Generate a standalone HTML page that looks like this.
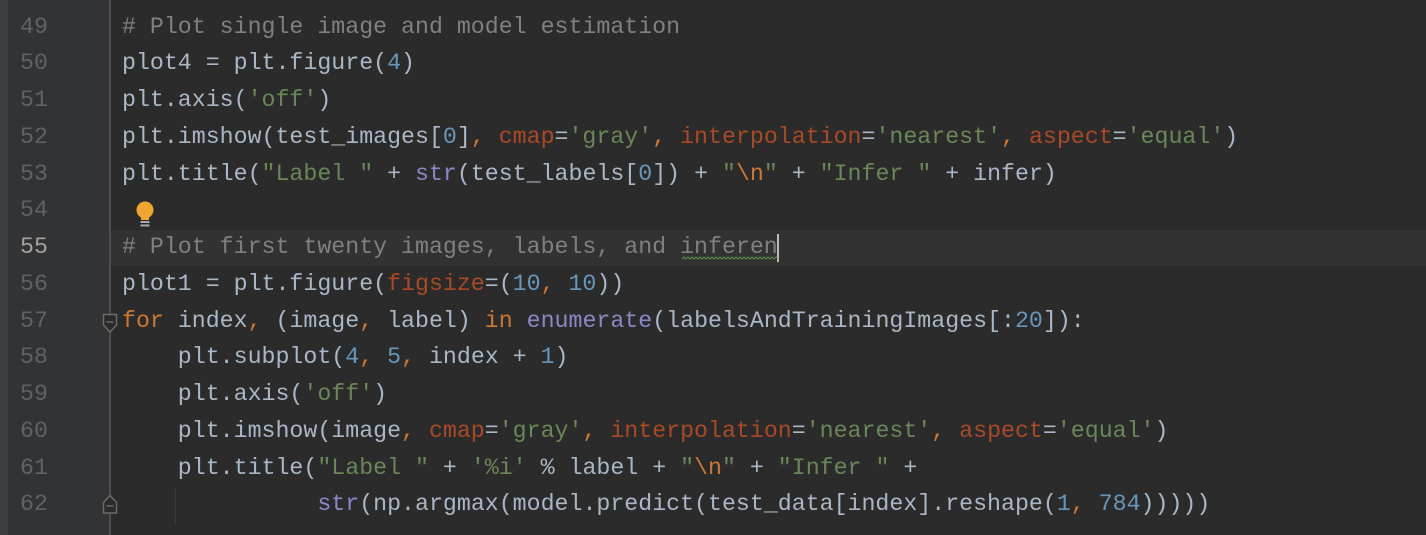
<!DOCTYPE html>
<html><head><meta charset="utf-8"><style>
html,body{margin:0;padding:0;width:1426px;height:535px;overflow:hidden;background:#2b2b2b;position:relative}
.strip{position:absolute;left:0;top:0;width:8px;height:535px;background:#3c3f41}
.gutter{position:absolute;left:8px;top:0;width:102px;height:535px;background:#313335}
.sep{position:absolute;left:109px;top:0;width:2px;height:535px;background:#4b4d4f}
.cur{position:absolute;left:110px;top:230px;width:1316px;height:36px;background:#323232}
.lines{position:absolute;left:0;top:8.6px;font-family:"Liberation Mono",monospace;font-size:23.25px;line-height:36.75px;white-space:pre}
.ln{position:absolute;left:20px;color:#606366}
.code{position:absolute;left:122px;color:#a9b7c6}
.c{color:#808080}.k{color:#cc7832}.s{color:#6a8759}.n{color:#6897bb}.b{color:#8888c6}.p{color:#aa4926}
.caret{position:absolute;left:777px;top:234px;width:2px;height:28px;background:#bbbbbb}
.sq{position:absolute;left:682px;top:256px;width:96px;height:4px}
</style></head><body>
<div class="strip"></div><div class="gutter"></div>
<div class="cur"></div><div class="sep"></div>
<div class="lines">
<div class="ln" style="top:0">49
50
51
52
53
54
<span style="color:#a4a3a3">55</span>
56
57
58
59
60
61
62</div>
<div class="code" style="top:0"><span class="c"># Plot single image and model estimation</span>
plot4 = plt.figure(<span class="n">4</span>)
plt.axis(<span class="s">'off'</span>)
plt.imshow(test_images[<span class="n">0</span>]<span class="k">, </span><span class="p">cmap</span>=<span class="s">'gray'</span><span class="k">, </span><span class="p">interpolation</span>=<span class="s">'nearest'</span><span class="k">, </span><span class="p">aspect</span>=<span class="s">'equal'</span>)
plt.title(<span class="s">"Label "</span> + <span class="b">str</span>(test_labels[<span class="n">0</span>]) + <span class="s">"<span class="k">\n</span>"</span> + <span class="s">"Infer "</span> + infer)

<span class="c"># Plot first twenty images, labels, and inferen</span>
plot1 = plt.figure(<span class="p">figsize</span>=(<span class="n">10</span><span class="k">, </span><span class="n">10</span>))
<span class="k">for </span>index<span class="k">, </span>(image<span class="k">, </span>label) <span class="k">in </span><span class="b">enumerate</span>(labelsAndTrainingImages[:<span class="n">20</span>]):
    plt.subplot(<span class="n">4</span><span class="k">, </span><span class="n">5</span><span class="k">, </span>index + <span class="n">1</span>)
    plt.axis(<span class="s">'off'</span>)
    plt.imshow(image<span class="k">, </span><span class="p">cmap</span>=<span class="s">'gray'</span><span class="k">, </span><span class="p">interpolation</span>=<span class="s">'nearest'</span><span class="k">, </span><span class="p">aspect</span>=<span class="s">'equal'</span>)
    plt.title(<span class="s">"Label "</span> + <span class="s">'%i'</span> % label + <span class="s">"<span class="k">\n</span>"</span> + <span class="s">"Infer "</span> +
              <span class="b">str</span>(np.argmax(model.predict(test_data[index].reshape(<span class="n">1</span><span class="k">, </span><span class="n">784</span>)))))</div></div>
<div class="caret"></div>
<svg class="sq" viewBox="0 0 96 4"><path d="M0 3 L2 1 L4 3 L6 1 L8 3 L10 1 L12 3 L14 1 L16 3 L18 1 L20 3 L22 1 L24 3 L26 1 L28 3 L30 1 L32 3 L34 1 L36 3 L38 1 L40 3 L42 1 L44 3 L46 1 L48 3 L50 1 L52 3 L54 1 L56 3 L58 1 L60 3 L62 1 L64 3 L66 1 L68 3 L70 1 L72 3 L74 1 L76 3 L78 1 L80 3 L82 1 L84 3 L86 1 L88 3 L90 1 L92 3 L94 1 L96 3" stroke="#5f8c4a" stroke-width="1" fill="none"/></svg>
<svg style="position:absolute;left:134px;top:201px" width="22" height="28" viewBox="0 0 22 28">
<circle cx="11" cy="9" r="8.5" fill="#f0a732"/><rect x="7" y="14" width="8" height="5" fill="#f0a732"/>
<rect x="6.5" y="20" width="9" height="2" fill="#a9a9a9"/><rect x="6.5" y="23.5" width="9" height="2" fill="#a9a9a9"/></svg>
<svg style="position:absolute;left:102px;top:313px" width="16" height="22" viewBox="0 0 16 22">
<path d="M1.5 1.5 H14.5 V12 L8 19 L1.5 12 Z" fill="#2b2b2b" stroke="#6b6b6b" stroke-width="1.5"/><path d="M4.5 9 H11.5" stroke="#6b6b6b" stroke-width="1.5"/></svg>
<svg style="position:absolute;left:102px;top:493px" width="16" height="22" viewBox="0 0 16 22">
<path d="M1.5 20 H14.5 V9.5 L8 2.5 L1.5 9.5 Z" fill="#2b2b2b" stroke="#6b6b6b" stroke-width="1.5"/><path d="M4.5 13 H11.5" stroke="#6b6b6b" stroke-width="1.5"/></svg>
<div style="position:absolute;left:175px;top:487px;width:1px;height:36px;background:#3b3b3b"></div>
</body></html>
